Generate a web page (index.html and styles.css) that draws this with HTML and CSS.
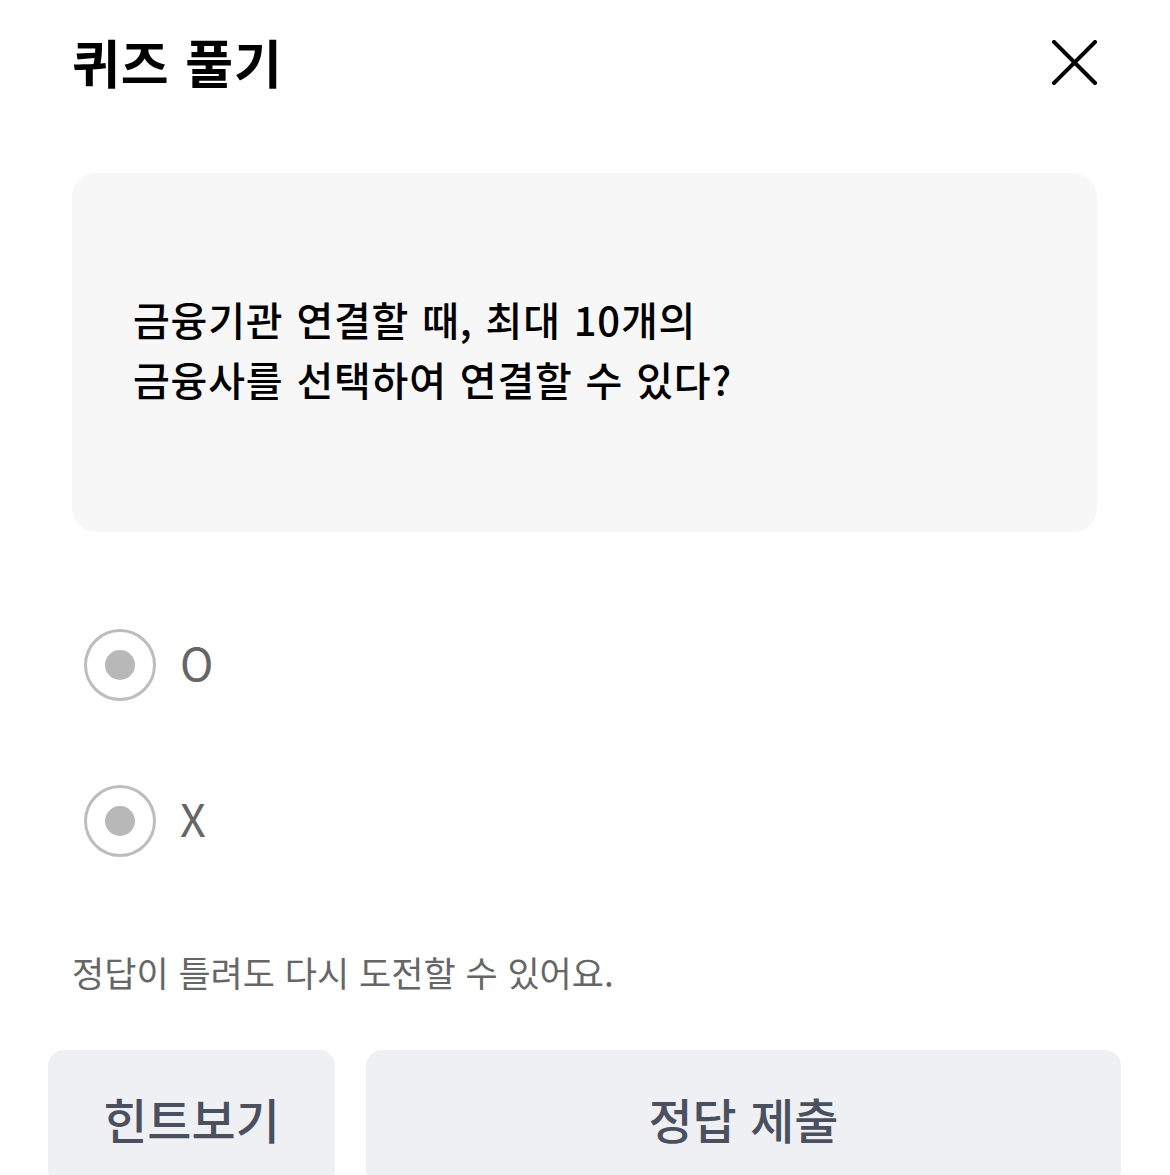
FILE: index.html
```html
<!DOCTYPE html>
<html lang="ko">
<head>
    <meta charset="utf-8" />
    <title>퀴즈 풀기</title>
    <meta name="viewport" content="width=device-width, initial-scale=1">
    <link rel="stylesheet" href="styles.css">
</head>
<body>
    <div class="page">
        <div class="header">
            <h1 class="title">퀴즈 풀기</h1>
            <button class="close" type="button" aria-label="닫기">
                <svg width="45" height="45" viewBox="0 0 45 45">
                    <path d="M2 2 L43 43 M43 2 L2 43" stroke="#000" stroke-width="4" stroke-linecap="square" fill="none" />
                </svg>
            </button>
        </div>

        <div class="question">
            <p>금융기관 연결할 때, 최대 10개의<br>금융사를 선택하여 연결할 수 있다?</p>
        </div>

        <div class="options">
            <label class="option">
                <span class="radio"><span class="dot"></span></span>
                <span class="option-label">O</span>
            </label>
            <label class="option">
                <span class="radio"><span class="dot"></span></span>
                <span class="option-label">X</span>
            </label>
        </div>

        <p class="hint-text">정답이 틀려도 다시 도전할 수 있어요.</p>

        <div class="actions">
            <button class="btn btn-hint" type="button">힌트보기</button>
            <button class="btn btn-submit" type="button">정답 제출</button>
        </div>
    </div>
</body>
</html>
```

FILE: styles.css
```css
* {
    padding: 0;
    margin: 0;
    box-sizing: border-box;
}

html, body {
    height: 100%;
    overflow: hidden;
}

body {
    background: #fff;
    font-family: "Noto Sans CJK KR", sans-serif;
    color: #000;
}

.header {
    height: 124px;
    padding: 0 73px 0 72px;
    display: flex;
    justify-content: space-between;
    align-items: center;
}

.title {
    font-size: 52px;
    font-weight: 700;
    line-height: 60px;
    letter-spacing: 1px;
}

.close {
    background: none;
    border: 0;
    width: 45px;
    height: 45px;
    display: flex;
}

.question {
    margin: 49px 73px 0 72px;
    height: 359px;
    background-color: #f7f7f7;
    border-radius: 24px;
    padding: 0 61px;
    display: flex;
    align-items: center;
}

.question p {
    font-size: 40px;
    font-weight: 500;
    line-height: 60px;
    letter-spacing: 0.8px;
    word-spacing: 1px;
    margin-top: -8px;
    color: #000;
}

.options {
    margin-top: 55px;
    padding-left: 84px;
}

.option {
    height: 156px;
    display: flex;
    align-items: center;
}

.radio {
    width: 72px;
    height: 72px;
    border: 3px solid #bdbdbd;
    border-radius: 50%;
    display: flex;
    justify-content: center;
    align-items: center;
    margin-right: 24px;
}

.dot {
    width: 30px;
    height: 30px;
    border-radius: 50%;
    background-color: #b8b8b8;
}

.option-label {
    font-size: 45px;
    color: #666;
    line-height: 60px;
    margin-top: -6px;
}

.hint-text {
    margin-top: 48px;
    padding-left: 72px;
    font-size: 35px;
    line-height: 50px;
    color: #666;
}

.actions {
    margin-top: 53px;
    padding: 0 49px 0 48px;
    display: flex;
    gap: 31px;
}

.btn {
    height: 136px;
    border: 0;
    border-radius: 16px;
    background-color: #eff0f4;
    font-family: "Noto Sans CJK KR", sans-serif;
    font-size: 48px;
    font-weight: 500;
    color: #4b505e;
}

.btn-hint {
    flex: 0 0 287px;
}

.btn-submit {
    flex: 1;
}
```
